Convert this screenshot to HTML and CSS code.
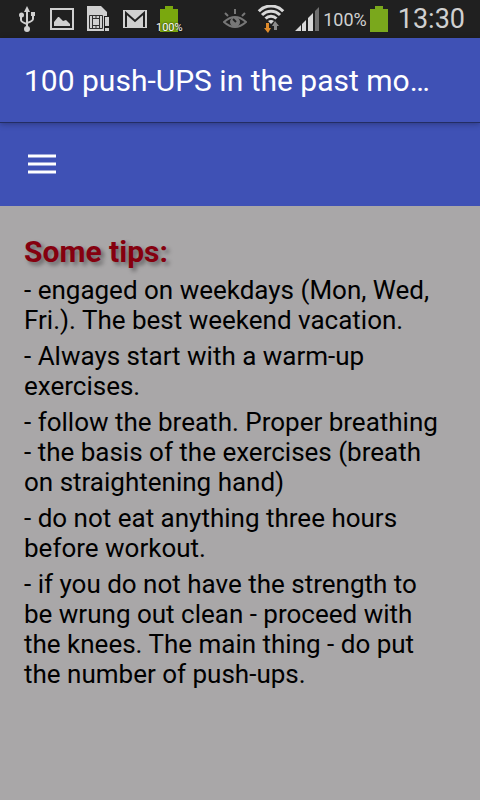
FILE: index.html
```
<!DOCTYPE html>
<html lang="en">
<head>
  <meta charset="utf-8">
  <meta name="viewport" content="width=device-width, initial-scale=1">
  <title>100 push-UPS</title>
  <link rel="stylesheet" href="styles.css">
</head>
<body>
  <div class="status">
    <div class="status-left">
      <!-- usb -->
      <svg width="18" height="26" viewBox="0 0 18 26" fill="none" stroke="#d0d0d0" stroke-width="2">
        <path d="M8 5v17M2 10v4q0 2 6 4M14 9v4q0 2-6 4"/>
        <path d="M8 0l3 6H5z" fill="#d0d0d0" stroke="none"/>
        <circle cx="8" cy="23" r="3" fill="#d0d0d0" stroke="none"/>
        <circle cx="2.5" cy="9" r="2.5" fill="#d0d0d0" stroke="none"/>
        <path d="M12 6h4v4h-4z" fill="#d0d0d0" stroke="none"/>
      </svg>
      <!-- picture -->
      <svg width="24" height="22" viewBox="0 0 24 22">
        <path d="M1 1h22v20H1z" fill="none" stroke="#d0d0d0" stroke-width="2"/>
        <path d="M4 18v-4l4-5h1l4 4 3-1 4 4v2z" fill="#d0d0d0"/>
      </svg>
      <!-- sim card -->
      <svg width="23" height="26" viewBox="0 0 23 26">
        <path d="M0 0h14l6 6v19H0z" fill="#d0d0d0"/>
        <path d="M2.5 9.5h13v13h-13zM5.5 9.5v13M12.5 9.5v13M5.5 12.5h7M5.5 19.5h7M9 9.5v3M9 19.5v3" fill="none" stroke="#303030"/>
        <path d="M17 10h6v16h-6z" fill="#202020"/>
        <path d="M18 11h4v9h-4zM18 22h4v3h-4z" fill="#d0d0d0"/>
      </svg>
      <!-- mail -->
      <svg width="24" height="18" viewBox="0 0 24 18">
        <path d="M0 0h24v18H0z" fill="#d0d0d0"/>
        <path d="M3 17V3l9 8 9-8v14" fill="none" stroke="#202020" stroke-width="2"/>
      </svg>
      <div class="charge">
        <svg width="18" height="26" viewBox="0 0 18 26"><path d="M5 0h8v3h5v23H0V3h5z" fill="#7aa80e"/></svg>
        <span class="charge-label">100%</span>
      </div>
    </div>
    <div class="status-right">
      <!-- smart stay -->
      <svg width="24" height="20" viewBox="0 0 24 20" fill="none" stroke="#777" stroke-width="2">
        <path d="M1 13q11-10 22 0-11 10-22 0z"/>
        <circle cx="12" cy="13" r="5" fill="#777" stroke="none"/>
        <path d="M2 4l3 3M12 0v5M22 4l-3 3"/>
        <path d="M10 10l3 3" stroke="#202020"/>
      </svg>
      <!-- wifi -->
      <svg width="28" height="28" viewBox="0 0 28 28" fill="none" stroke="#d8d8d8" stroke-width="3">
        <path d="M1.8 6.2a17 17 0 0 1 24.4 0M5 10a12.5 12.5 0 0 1 18 0M8.5 13.5a8 8 0 0 1 11 0"/>
        <path d="M11 16q3-2 6 0l-3 3z" fill="#d8d8d8" stroke="none"/>
        <path d="M9 18h3v5h2l-3 5-4-5h2z" fill="#df8b2b" stroke="none"/>
        <path d="M17 25v-4h-2l3-5 4 5h-2v4z" fill="#8c8c8c" stroke="none"/>
      </svg>
      <!-- signal -->
      <svg width="24" height="24" viewBox="0 0 24 24" fill="#d8d8d8">
        <path d="M0 24l6-6v6zM7 24v-7l4-4v11zM13 24V11l5-5v18z"/>
        <path d="M20 24V4l4-4v24z" fill="#6f6f6f"/>
      </svg>
      <span class="percent">100%</span>
      <svg width="18" height="26" viewBox="0 0 18 26"><path d="M5 0h8v3h5v23H0V3h5z" fill="#7aa81c"/></svg>
      <span class="clock">13:30</span>
    </div>
  </div>

  <header class="bar">
    <h1 class="title">100 push-UPS in the past mo…</h1>
  </header>
  <nav class="toolbar">
    <button class="menu" type="button" aria-label="Menu">
      <svg width="28" height="20" viewBox="0 0 28 20" fill="#fff">
        <path d="M0 0h28v4H0zM0 8h28v4H0zM0 16h28v4H0z" opacity=".5"/>
        <path d="M0 1h28v2H0zM0 9h28v2H0zM0 17h28v2H0z"/>
      </svg>
    </button>
  </nav>

  <main class="tips">
    <h2>Some tips:</h2>
    <p>- engaged on weekdays (Mon, Wed, Fri.). The best weekend vacation.</p>
    <p>- Always start with a warm-up exercises.</p>
    <p>- follow the breath. Proper breathing - the basis of the exercises (breath on straightening hand)</p>
    <p>- do not eat anything three hours before workout.</p>
    <p>- if you do not have the strength to be wrung out clean - proceed with the knees. The main thing - do put the number of push-ups.</p>
  </main>
</body>
</html>
```
FILE: styles.css
```
body {
    margin: 0;
    min-height: 100vh;
    font-family: Roboto, "Liberation Sans", sans-serif;
    background: #a9a7a8;
    color: #000;
}
svg {
    display: block;
    flex: none;
}
.status {
    display: flex;
    justify-content: space-between;
    height: 38px;
    padding: 0 15px 0 19px;
    background: #202020;
    color: #d0d0d0;
}
.status-left, .status-right {
    display: flex;
    align-items: center;
}
.status-left {
    gap: 13px;
}
.status-right {
    gap: 10px;
}
.charge {
    position: relative;
}
.charge-label {
    position: absolute;
    left: -4px;
    bottom: -2px;
    font-size: 11px;
    line-height: 12px;
    color: #fff;
    text-shadow: 0 0 2px #000;
}
.percent {
    font-size: 18px;
    margin: 0 -7px 0 -6px;
}
.clock {
    font-size: 27px;
}
.bar {
    position: relative;
    padding: 25px 24px 23px;
    background: #3f51b5;
    border-bottom: 1px solid #232d64;
    box-shadow: 0 1px 6px rgba(0, 0, 0, .3);
}
.title {
    margin: 0;
    font-size: 30px;
    font-weight: 400;
    line-height: 36px;
    color: #fff;
    white-space: nowrap;
    overflow: hidden;
    text-overflow: ellipsis;
}
.toolbar {
    display: flex;
    padding: 16px 16px 17px;
    background: #3f51b5;
}
.menu {
    padding: 15px 12px;
    border: 0;
    background: none;
    cursor: pointer;
}
.tips {
    padding: 28px 40px 28px 24px;
    font-size: 26px;
    line-height: 30px;
}
.tips h2 {
    margin: 0 0 5px;
    font-size: 30px;
    line-height: 36px;
    color: #85000f;
    text-shadow: 3px 3px 4px rgba(0, 0, 0, .4);
}
.tips p {
    margin: 0 0 6px;
}
```
